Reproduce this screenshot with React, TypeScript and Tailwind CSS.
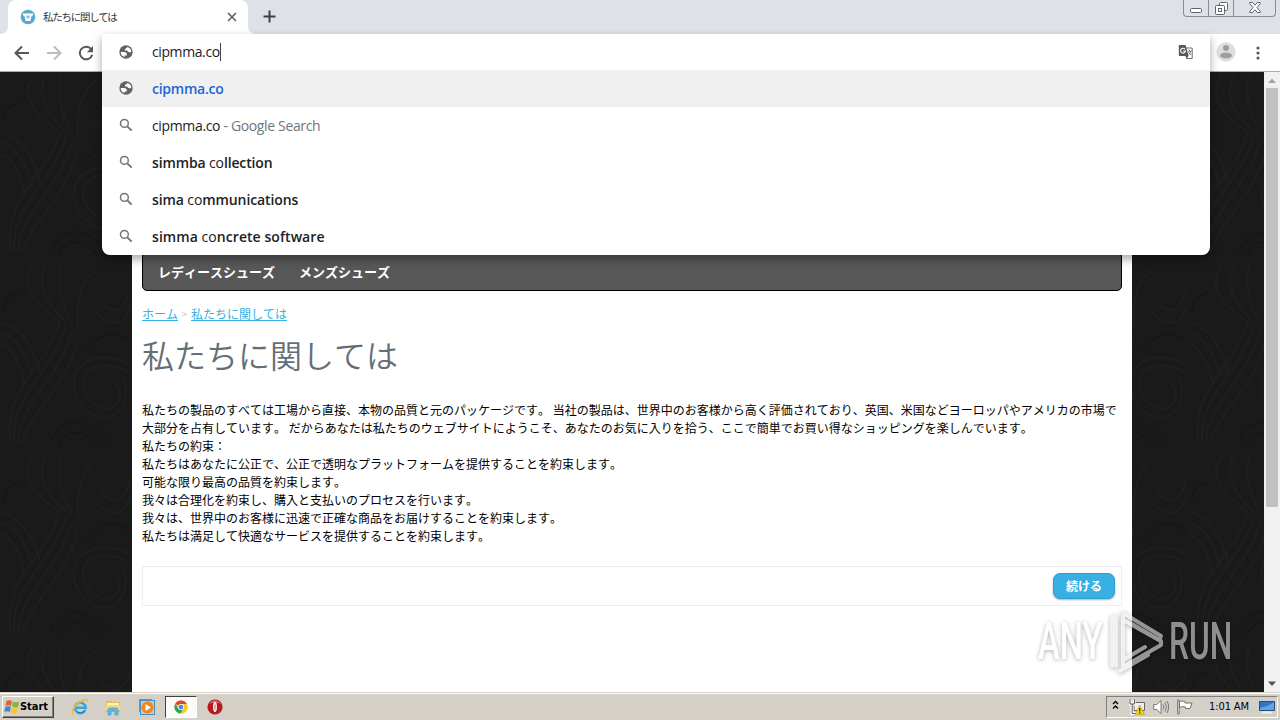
import type { ReactNode } from 'react';

const suggestions: { icon: 'globe' | 'search'; content: ReactNode }[] = [
    { icon: 'globe', content: <span className="font-semibold tracking-[-0.25px] text-[#1a66d8]">cipmma.co</span> },
    {
        icon: 'search',
        content: (
            <span className="tracking-[-0.35px]">
                cipmma.co<span className="text-[#70757a]"> - Google Search</span>
            </span>
        ),
    },
    { icon: 'search', content: <span className="tracking-[-0.13px]"><b className="font-semibold">simmba </b>co<b className="font-semibold">llection</b></span> },
    { icon: 'search', content: <span className="tracking-[-0.1px]"><b className="font-semibold">sima </b>co<b className="font-semibold">mmunications</b></span> },
    { icon: 'search', content: <span className="tracking-[0.06px]"><b className="font-semibold">simma </b>co<b className="font-semibold">ncrete software</b></span> },
];

const paragraphs = [
    '私たちの製品のすべては工場から直接、本物の品質と元のパッケージです。 当社の製品は、世界中のお客様から高く評価されており、英国、米国などヨーロッパやアメリカの市場で',
    '大部分を占有しています。 だからあなたは私たちのウェブサイトにようこそ、あなたのお気に入りを拾う、ここで簡単でお買い得なショッピングを楽しんでいます。',
    '私たちの約束：',
    '私たちはあなたに公正で、公正で透明なプラットフォームを提供することを約束します。',
    '可能な限り最高の品質を約束します。',
    '我々は合理化を約束し、購入と支払いのプロセスを行います。',
    '我々は、世界中のお客様に迅速で正確な商品をお届けすることを約束します。',
    '私たちは満足して快適なサービスを提供することを約束します。',
];

function GlobeIcon() {
    return (
        <svg className="h-4 w-4" viewBox="0 0 16 16">
            <circle cx="8" cy="8" r="6.700" fill="#5f6368" />
            <path d="M2.700 8h3.100c2.200 0 3.200 1.100 3 3.400H6.500V13A5.300 5.300 0 0 1 2.700 8z" fill="#fff" />
            <path d="M9.500 2.900A5.300 5.300 0 0 1 13.300 7.700Q12.700 8.300 11.500 8.300 9.300 8.300 9.300 6.500H6.800Q6.600 4.200 8.700 4.100 8.800 3.300 9.500 2.900z" fill="#fff" />
        </svg>
    );
}

function SearchIcon() {
    return (
        <svg className="h-4 w-4" viewBox="0 0 16 16" fill="none" stroke="#757575">
            <circle cx="6.400" cy="6.400" r="3.900" strokeWidth="1.500" />
            <path d="M9.300 9.300l4.400 4.400" strokeWidth="1.900" />
        </svg>
    );
}

function TranslateIcon() {
    return (
        <svg className="h-4 w-4" viewBox="0 0 16 16">
            <path d="M7 4h7.200v10.500H8.500z" fill="#fff" stroke="#6b6e72" />
            <path d="M1.500 1h6L10.700 12H1.500Q.8 12 .8 11.300V1.700Q.8 1 1.500 1z" fill="#56595d" />
            <path d="M7.700 12l1.200 2.500 1.600-2.500z" fill="#56595d" />
            <path d="M7 5.300A2.400 2.400 0 1 0 7.400 7H5.200" fill="none" stroke="#fff" strokeWidth="1.100" />
            <path d="M10 7h3.500M11.500 6v1M13 7q-.5 2-2 3.500M10.500 8q1 2 2.700 3" fill="none" stroke="#6b6e72" strokeWidth=".9" />
        </svg>
    );
}

function TabStrip() {
    return (
        <div className="flex h-[34px] bg-[#dee1e6] pl-2">
            <div className="relative flex w-[240px] items-center rounded-t-lg bg-white pl-3">
                <svg className="absolute -left-2 bottom-0 h-2 w-2" viewBox="0 0 8 8"><path d="M8 0v8H0Q8 8 8 0z" fill="#fff" /></svg>
                <svg className="absolute -right-2 bottom-0 h-2 w-2" viewBox="0 0 8 8"><path d="M0 0v8h8Q0 8 0 0z" fill="#fff" /></svg>
                <svg className="h-4 w-4" viewBox="0 0 16 16">
                    <circle cx="8" cy="8" r="7.300" fill="#5ba9d3" />
                    <path d="M3 4.500h10v1.700l-1.500 1L10.300 12H5.700L4.500 7.200 3 6.200z" fill="#fff" />
                    <path d="M6.200 6.500h3.600L9.200 9.500H6.800z" fill="#8cc5e4" />
                </svg>
                <span className="ml-[7px] w-[180px] whitespace-nowrap text-[10.5px] leading-4 tracking-[-1.25px] text-[#33363a]">私たちに関しては</span>
                <svg className="ml-1 h-[10px] w-[10px] stroke-[#5f6368]" viewBox="0 0 10 10"><path d="M1 1l8 8M9 1L1 9" strokeWidth="1.700" /></svg>
            </div>
            <svg className="ml-[15px] mt-[10px] h-[13px] w-[13px] stroke-[#3c4043]" viewBox="0 0 13 13"><path d="M6.500 .5v12M.5 6.500h12" strokeWidth="2" /></svg>
            <div className="ml-auto mr-1 flex h-[17px] rounded-b border border-t-0 border-[#878c95] text-[#5e636d]">
                <div className="flex w-[25px] items-end justify-center border-r border-[#878c95] pb-[3px]">
                    <svg className="h-[5px] w-3" viewBox="0 0 12 5"><rect x=".5" y=".5" width="11" height="4" rx="1" fill="#fff" stroke="currentColor" /></svg>
                </div>
                <div className="flex w-[25px] items-end justify-center border-r border-[#878c95] pb-px">
                    <svg className="h-[13px] w-[13px]" viewBox="0 0 13 13" fill="#fff" stroke="currentColor">
                        <rect x="4.500" y=".5" width="8" height="8" rx="1" />
                        <rect x=".5" y="3.500" width="9" height="9" rx="1" />
                        <rect x="3.500" y="6.500" width="3" height="3" />
                    </svg>
                </div>
                <div className="flex w-[41px] items-end justify-center pb-[3px]">
                    <svg className="h-[11px] w-3" viewBox="0 0 12 11"><path d="M.7.500h3L6 3.300 8.300.500h3v1L8 5.500l3.300 4v1h-3L6 7.700 3.700 10.500h-3v-1L4 5.500.7 1.500z" fill="#fff" stroke="currentColor" /></svg>
                </div>
            </div>
        </div>
    );
}

function Toolbar() {
    return (
        <div className="flex h-[38px] items-center border-b border-[#a9abae] bg-white pl-[14px]">
            <svg className="h-4 w-4" viewBox="0 0 16 16" fill="none" stroke="#55585c" strokeWidth="2"><path d="M15 8H2M8 1.500L1.500 8 8 14.500" /></svg>
            <svg className="ml-4 h-4 w-4" viewBox="0 0 16 16" fill="none" stroke="#babcbe" strokeWidth="2"><path d="M1 8h13M8 1.500L14.500 8 8 14.500" /></svg>
            <svg className="ml-4 h-4 w-4" viewBox="0 0 16 16" fill="none" stroke="#55585c" strokeWidth="2">
                <path d="M13.200 4.200A6.300 6.300 0 1 0 14.200 9.800" />
                <path d="M15 1v6.200H8.800z" fill="#55585c" stroke="none" />
            </svg>
            <svg className="mb-[2px] ml-auto h-5 w-5" viewBox="0 0 20 20">
                <circle cx="10" cy="10" r="9.700" fill="#dedede" />
                <circle cx="10" cy="6" r="3" fill="#9e9e9e" />
                <ellipse cx="10" cy="13.500" rx="6" ry="3" fill="#9e9e9e" />
            </svg>
            <svg className="ml-5 mr-5 h-4 w-1" viewBox="0 0 4 16" fill="#55585c"><circle cx="2" cy="3" r="1.600" /><circle cx="2" cy="8" r="1.600" /><circle cx="2" cy="13" r="1.600" /></svg>
        </div>
    );
}

function Omnibox() {
    return (
        <div className="absolute left-[102px] top-[34px] z-10 w-[1108px] overflow-hidden rounded-b-lg bg-white font-['Open_Sans',sans-serif] text-[14px] leading-5 text-[#202124] shadow-[0_4px_10px_rgba(0,0,0,0.35)]">
            <div className="flex h-9 items-center pl-4 pr-4">
                <GlobeIcon />
                <span className="ml-[18px] tracking-[-0.4px]">cipmma.co</span>
                <span className="h-[18px] w-px bg-[#444]" />
                <span className="ml-auto"><TranslateIcon /></span>
            </div>
            {suggestions.map((s, i) => (
                <div key={i} className={`flex h-[37px] items-center pl-4 ${i === 0 ? 'bg-[#f0f0f1]' : ''}`}>
                    <span className="pb-[2px]">{s.icon === 'globe' ? <GlobeIcon /> : <SearchIcon />}</span>
                    <span className="ml-[18px] whitespace-pre">{s.content}</span>
                </div>
            ))}
        </div>
    );
}

// faint floral wallpaper behind the shop
function Wallpaper() {
    return (
        <svg className="absolute inset-0 h-full w-full" fill="none" stroke="#1f1f1f" strokeWidth="1.500">
            <defs>
                <pattern id="damask" width="132" height="190" patternUnits="userSpaceOnUse">
                    <path d="M10 180C5 120 45 110 60 60M14 180C12 130 50 115 66 65M18 180C20 140 58 120 72 70M22 182C30 150 66 126 78 78" />
                    <path d="M60 60C30 40 20 20 34 4M66 60C44 40 36 20 46 4M72 62C60 40 56 20 62 2M78 66C76 40 80 20 96 8" />
                    <path d="M130 110C90 90 70 120 92 140S130 130 112 120M130 102C84 80 58 118 84 146S136 138 122 116" />
                    <path d="M2 60Q30 70 40 110M2 70Q24 80 32 114M2 82Q18 90 24 120M100 40Q120 60 130 30M94 48Q120 76 131 44" />
                    <path d="M50 180Q70 140 110 180M58 184Q72 156 98 184" stroke="#151515" />
                    <path d="M84 90Q110 60 130 80M20 30Q4 34 4 50" stroke="#151515" />
                </pattern>
            </defs>
            <rect width="100%" height="100%" fill="url(#damask)" stroke="none" />
        </svg>
    );
}

function ShopPage() {
    return (
        <div className="flex h-[620px] [font-kerning:none]">
            <div className="relative flex flex-1 justify-center bg-[#1a1a1a]">
                <Wallpaper />
                <main className="relative w-[1000px] bg-white px-[10px] pt-[179px]">
                    <nav className="flex h-10 items-center gap-6 rounded-[5px] border border-black bg-[#575757] px-[15px] text-[13px] font-bold leading-none text-white">
                        <span>レディースシューズ</span>
                        <span>メンズシューズ</span>
                    </nav>
                    <div className="mt-[14px] flex h-[18px] items-center text-[12px] leading-[18px] text-[#38b0e3]">
                        <span className="underline">ホーム</span>
                        <span className="w-[13px] text-center text-[10px] text-[#c4c4c4]">&gt;</span>
                        <span className="underline">私たちに関しては</span>
                    </div>
                    <h1 className="mt-[11px] h-10 text-[32px] font-[350] leading-10 text-[#636e75]">私たちに関しては</h1>
                    <div className="mt-[27px] whitespace-nowrap text-[12px] leading-[18px] text-black">
                        {paragraphs.map((p) => (
                            <p key={p}>{p}</p>
                        ))}
                    </div>
                    <div className="mt-[21px] flex h-10 items-center justify-end border border-[#eee] pr-[6px]">
                        <button className="h-[26px] w-[62px] rounded-[7px] border border-[#2b9fd3] bg-[#38b0e3] pb-px text-[12px] font-bold leading-none text-white shadow-[0_1px_2px_rgba(0,0,0,0.3)]">続ける</button>
                    </div>
                </main>
            </div>
            <div className="flex w-4 flex-col items-center bg-[#f1f1f1]">
                <svg className="h-4 w-4" viewBox="0 0 16 16"><path d="M4 11h8L8 6.500z" fill="#a3a3a3" /></svg>
                <div className="h-[419px] w-3 bg-[#c1c1c1]" />
                <svg className="mt-auto h-4 w-4" viewBox="0 0 16 16"><path d="M4 5.500h8L8 10z" fill="#505050" /></svg>
            </div>
        </div>
    );
}

function Watermark() {
    return (
        <svg className="absolute left-[1030px] top-[602px] z-10 h-[76px] w-[230px] opacity-60 drop-shadow-[0_1px_2px_rgba(0,0,0,0.5)]" viewBox="0 0 230 76" fontFamily="Roboto, sans-serif" fontSize="52">
            <g transform="translate(8 57) scale(.63 1)" fontWeight="500">
                <text fill="#fff">ANY</text>
            </g>
            <g transform="translate(139 57) scale(.61 1)" fontWeight="500">
                <text fill="#dedede">RUN</text>
            </g>
            <g fill="none" stroke="#e8e8e8" strokeWidth="4" strokeLinecap="round" strokeLinejoin="round">
                <path d="M82 64V15h4v49M93 22V11L131 34 129 38 95 19" />
                <path d="M93 25V62M115 45L93 58V65L131 43V39L102 22M90 69L118 53" />
            </g>
        </svg>
    );
}

function WindowsLogo() {
    return (
        <svg className="h-4 w-4" viewBox="0 0 16 16">
            <path d="M2.500 2q3-1.700 5.500 0L7 7Q4.500 5.500 1.500 7z" fill="#e8602c" />
            <path d="M9 2.500q3 1.500 6 0L14 8q-3 1.200-6-.5z" fill="#83b73b" />
            <path d="M1.300 8q3-1.500 5.500 0l-1 5Q3 11.500.3 13z" fill="#3989d0" />
            <path d="M7.700 8.500q3 1.500 6 .5l-1 5q-3 1.200-6-.5z" fill="#f7c52d" />
        </svg>
    );
}

function Taskbar() {
    return (
        <div className="flex h-7 items-center border-t border-[#d4d0c8] bg-[#d4d0c8] pl-[2px] pr-[2px] pt-px font-['DejaVu_Sans_Condensed','DejaVu_Sans',sans-serif] text-[11px] text-black shadow-[inset_0_1px_0_#fff]">
            <div className="flex h-[22px] w-[52px] items-center border border-b-[#404040] border-l-white border-r-[#404040] border-t-white pl-px font-bold tracking-[-0.05px] shadow-[inset_-1px_-1px_0_#808080]">
                <WindowsLogo />
                <span>Start</span>
            </div>
            <svg className="ml-[17px] h-[18px] w-[18px]" viewBox="0 0 18 18" fill="none">
                <path d="M14.200 12.200A5.300 5.300 0 1 1 14.700 9.800H5" stroke="#3ba4df" strokeWidth="2.600" />
                <path d="M14.300 11.500A5.600 5.600 0 0 1 7 14.300" stroke="#1b75bd" strokeWidth="1" />
                <path d="M2 16.500C0 14 3 8 8 4.500S17 1 16.500 4" stroke="#edbd36" strokeWidth="1.700" />
            </svg>
            <svg className="ml-[15px] h-[18px] w-[18px]" viewBox="0 0 18 18">
                <path d="M2 3h5l1 1h8v10H2z" fill="#e3bd57" />
                <path d="M3 5h12v7H3z" fill="#fff4b4" />
                <path d="M2 7h14v5H2z" fill="#f3d979" />
                <path d="M4 17v-5q0-2 2-2h6q2 0 2 2v5h-3v-4H7v4z" fill="#65b9e6" stroke="#3e92c5" strokeWidth=".6" />
            </svg>
            <svg className="ml-[16px] h-[18px] w-[18px]" viewBox="0 0 18 18">
                <rect x="1.500" y="1.500" width="12" height="12" fill="#cfe8f7" stroke="#5a9fc9" />
                <rect x="2.500" y="2.500" width="14" height="14" fill="#a9d3ea" stroke="#4b8fbd" />
                <circle cx="9.500" cy="9.500" r="6" fill="#f18619" />
                <path d="M7.500 6L13 9.500l-5.500 3.500z" fill="#fff" />
            </svg>
            <div className="ml-[9px] flex h-[22px] w-[32px] items-center justify-center border border-b-white border-l-[#404040] border-r-white border-t-[#404040] bg-[#fbfbfa]">
                <svg className="h-[14px] w-[14px]" viewBox="0 0 16 16">
                    <circle cx="8" cy="8" r="7.500" fill="#f7cb2d" />
                    <path d="M8 8L1.500 4.250A7.500 7.500 0 0 1 14.500 4.250z" fill="#db4437" />
                    <path d="M1.500 4.250A7.500 7.500 0 0 0 7.500 15.500L11 9.700 8 8 4.800 9.700z" fill="#2fa456" />
                    <path d="M8 4.500h6.650A7.500 7.500 0 0 1 7.500 15.500L11 9.700z" fill="#f7cb2d" />
                    <circle cx="8" cy="8" r="3.500" fill="#fff" />
                    <circle cx="8" cy="8" r="2.700" fill="#4285f4" />
                </svg>
            </div>
            <svg className="ml-[10px] h-4 w-4" viewBox="0 0 16 16">
                <circle cx="8" cy="8" r="7.600" fill="#b51c20" />
                <path d="M2 5Q8-2 14 5 8 1.500 2 5z" fill="#e98080" />
                <ellipse cx="8" cy="8" rx="1.900" ry="5" fill="#fff" />
                <ellipse cx="8" cy="8" rx=".4" ry="3.500" fill="#b51c20" />
            </svg>
            <div className="ml-auto flex h-[22px] w-[172px] items-center border border-b-white border-l-[#808080] border-r-white border-t-[#808080] pl-[5px]">
                <svg className="mb-1 h-[10px] w-[7px]" viewBox="0 0 7 10" fill="none" stroke="#000" strokeWidth="1.400"><path d="M1 4l2.500-2.500L6 4M1 8.500L3.500 6 6 8.500" /></svg>
                <svg className="ml-[10px] h-4 w-4" viewBox="0 0 16 16">
                    <path d="M5 3.500h10.500v8H5z" fill="#eee" stroke="#666" />
                    <path d="M1 1v4h4V1M3 5v9.500h6" fill="none" stroke="#fff" strokeWidth="3" />
                    <path d="M1 .5v4.500h4.500V.5M3.200 5v9.500H8" fill="none" stroke="#555" />
                    <path d="M6 15.500L10.700 6l4.800 9.500z" fill="#f4d51b" stroke="#b29605" strokeWidth=".6" />
                    <path d="M10.700 9v3.500M10.700 13.300v1.300" stroke="#222" strokeWidth="1.200" />
                </svg>
                <svg className="ml-2 h-4 w-4" viewBox="0 0 16 16" fill="none" stroke="#77777b">
                    <path d="M.7 5.500h3L8 1.500v13l-4.300-4h-3z" fill="#fff" />
                    <path d="M10 5.500q1.500 2.500 0 5M12 3.500q3 4.500 0 9M14 2q3.300 6 0 12" />
                </svg>
                <svg className="ml-2 h-4 w-4" viewBox="0 0 16 16" fill="#fff" stroke="#707070">
                    <path d="M.7 1h1.500v14H.7z" />
                    <path d="M2.500 2.500q3-1 5.500 0v1.500h7l-2 5.500H8.500V8q-3-1-6 .5z" />
                </svg>
                <span className="ml-4 whitespace-nowrap tracking-[-0.1px]">1:01 AM</span>
                <svg className="ml-auto mr-[2px] h-[14px] w-4" viewBox="0 0 16 14">
                    <path d="M.5 1.500h15v9H.5z" fill="#3176c4" stroke="#284d77" />
                    <path d="M1 8Q9 7 15 2v8H1z" fill="#63a5e2" />
                    <path d="M3 12.500h10" stroke="#e8eef4" strokeWidth="2" />
                </svg>
            </div>
        </div>
    );
}

export default function App() {
    return (
        <div className="relative h-[720px] w-[1280px] overflow-hidden bg-white font-['Noto_Sans_CJK_JP',sans-serif]">
            <TabStrip />
            <Toolbar />
            <ShopPage />
            <Taskbar />
            <Omnibox />
            <Watermark />
        </div>
    );
}
